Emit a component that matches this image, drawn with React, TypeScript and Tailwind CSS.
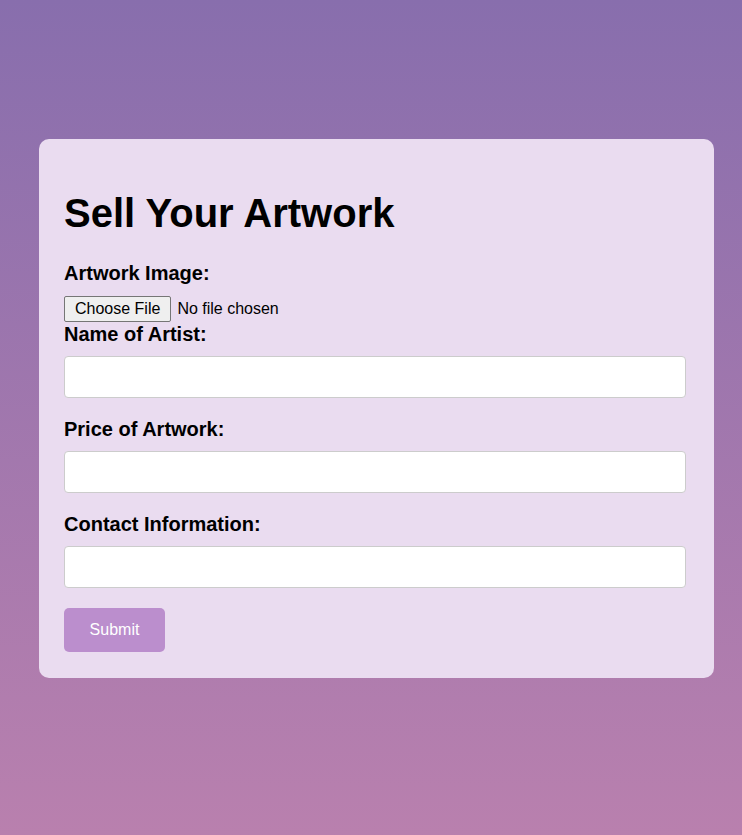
export default function App() {
  return (
    <div className="min-h-screen w-full overflow-hidden bg-[linear-gradient(to_bottom,#886ead,#b980ae)] font-['Liberation_Sans',Arial,sans-serif] text-black">
      <div className="mt-[139px] ml-[39px] w-[675px] rounded-[10px] bg-[#eadcf0] px-[25px] pt-[25px] pb-[26px]">
        <h1 className="mt-[26px] mb-[26px] text-[40px] leading-[46px] font-bold">Sell Your Artwork</h1>
        <form onSubmit={(e) => e.preventDefault()}>
          <label className="block mb-[10px] text-[20px] leading-[23px] font-bold">Artwork Image:</label>
          <input
            type="file"
            className="block h-[28px] pt-px text-[16px] leading-[18px] file:mr-[6px] file:h-[26px] file:rounded-[2px] file:border file:border-[#767676] file:bg-[#efefef] file:px-[10px] file:text-[16px] file:text-black"
          />
          <label className="block mb-[10px] text-[20px] leading-[23px] font-bold">Name of Artist:</label>
          <input type="text" className="block mb-[20px] h-[42px] w-[622px] rounded-[4px] border border-[#ccc] bg-white px-[10px] text-[16px] outline-none" />
          <label className="block mb-[10px] text-[20px] leading-[23px] font-bold">Price of Artwork:</label>
          <input type="text" className="block mb-[20px] h-[42px] w-[622px] rounded-[4px] border border-[#ccc] bg-white px-[10px] text-[16px] outline-none" />
          <label className="block mb-[10px] text-[20px] leading-[23px] font-bold">Contact Information:</label>
          <input type="text" className="block mb-[20px] h-[42px] w-[622px] rounded-[4px] border border-[#ccc] bg-white px-[10px] text-[16px] outline-none" />
          <button type="submit" className="block h-[44px] w-[101px] rounded-[5px] bg-[#bb8ecd] text-[16px] text-white">
            Submit
          </button>
        </form>
      </div>
    </div>
  );
}
